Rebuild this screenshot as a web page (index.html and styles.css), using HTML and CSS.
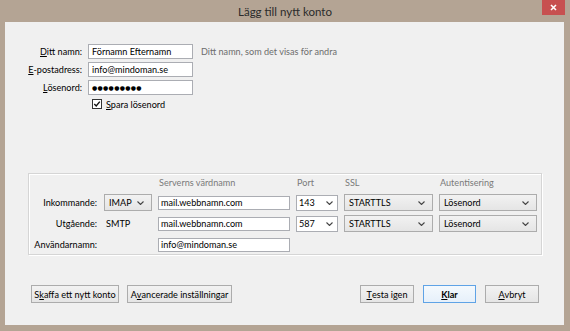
FILE: index.html
```html
<!DOCTYPE html>
<html lang="sv">
<head>
<meta charset="utf-8">
<title>Lägg till nytt konto</title>
<link rel="stylesheet" href="styles.css">
</head>
<body>
<div class="window">
  <div class="titlebar">
    <span class="title">Lägg till nytt konto</span>
    <div class="close">
      <svg width="7" height="7" viewBox="0 0 7 7"><path d="M1 1 L6 6 M6 1 L1 6" stroke="#fff" stroke-width="1.6" fill="none"/></svg>
    </div>
  </div>
  <div class="client">
    <div class="account">
      <span class="label"><u>D</u>itt namn:</span>
      <div class="input">Förnamn Efternamn</div>
      <span class="hint">Ditt namn, som det visas för andra</span>

      <span class="label"><u>E</u>-postadress:</span>
      <div class="input">info@mindoman.se</div>
      <span></span>

      <span class="label"><u>L</u>ösenord:</span>
      <div class="input"><span class="dots">●●●●●●●●●</span></div>
      <span></span>

      <span></span>
      <div class="remember">
        <svg class="check" width="10" height="10" viewBox="0 0 10 10"><rect x="0.5" y="0.5" width="9" height="9" fill="#fff" stroke="#333"/><path d="M2.3 5 L4.2 7 L7.8 2.6" stroke="#111" stroke-width="1.4" fill="none"/></svg>
        <span><u>S</u>para lösenord</span>
      </div>
    </div>

    <div class="server">
      <span></span>
      <span></span>
      <span class="head">Serverns värdnamn</span>
      <span class="head">Port</span>
      <span class="head">SSL</span>
      <span class="head">Autentisering</span>

      <span class="slabel">Inkommande:</span>
      <div class="combo"><span>IMAP</span><svg width="7" height="4" viewBox="0 0 7 4"><path d="M0.5 0.5 L3.5 3.5 L6.5 0.5" stroke="#444" stroke-width="1.1" fill="none"/></svg></div>
      <div class="sinput">mail.webbnamn.com</div>
      <div class="combo port"><span>143</span><svg width="7" height="4" viewBox="0 0 7 4"><path d="M0.5 0.5 L3.5 3.5 L6.5 0.5" stroke="#444" stroke-width="1.1" fill="none"/></svg></div>
      <div class="combo"><span>STARTTLS</span><svg width="7" height="4" viewBox="0 0 7 4"><path d="M0.5 0.5 L3.5 3.5 L6.5 0.5" stroke="#444" stroke-width="1.1" fill="none"/></svg></div>
      <div class="combo"><span>Lösenord</span><svg width="7" height="4" viewBox="0 0 7 4"><path d="M0.5 0.5 L3.5 3.5 L6.5 0.5" stroke="#444" stroke-width="1.1" fill="none"/></svg></div>

      <span class="slabel">Utgående:</span>
      <span class="smtp">SMTP</span>
      <div class="sinput">mail.webbnamn.com</div>
      <div class="combo port"><span>587</span><svg width="7" height="4" viewBox="0 0 7 4"><path d="M0.5 0.5 L3.5 3.5 L6.5 0.5" stroke="#444" stroke-width="1.1" fill="none"/></svg></div>
      <div class="combo"><span>STARTTLS</span><svg width="7" height="4" viewBox="0 0 7 4"><path d="M0.5 0.5 L3.5 3.5 L6.5 0.5" stroke="#444" stroke-width="1.1" fill="none"/></svg></div>
      <div class="combo"><span>Lösenord</span><svg width="7" height="4" viewBox="0 0 7 4"><path d="M0.5 0.5 L3.5 3.5 L6.5 0.5" stroke="#444" stroke-width="1.1" fill="none"/></svg></div>

      <span class="slabel">Användarnamn:</span>
      <span></span>
      <div class="sinput">info@mindoman.se</div>
    </div>

    <div class="btnrow">
      <div class="group">
        <div class="btn w-skaffa">S<u>k</u>affa ett nytt konto</div>
        <div class="btn w-avanc">A<u>v</u>ancerade inställningar</div>
      </div>
      <div class="group right">
        <div class="btn w-testa"><u>T</u>esta igen</div>
        <div class="btn w-klar default"><u>K</u>lar</div>
        <div class="btn w-avbryt"><u>A</u>vbryt</div>
      </div>
    </div>
  </div>
</div>
</body>
</html>
```
FILE: styles.css
```css
html, body {
  margin: 0;
  padding: 0;
}
body {
  width: 570px;
  height: 331px;
  overflow: hidden;
  font-family: Lato, "Open Sans", sans-serif;
  font-size: 9.1px;
  color: #000;
}
u {
  text-underline-offset: 1px;
}
.window {
  width: 570px;
  height: 331px;
  background: #b4a494;
  display: flex;
  flex-direction: column;
  position: relative;
}
.titlebar {
  height: 22px;
  display: flex;
  align-items: center;
  justify-content: center;
  font-size: 11.5px;
  color: #2b2b2b;
  padding-top: 1px;
  box-sizing: border-box;
}
.close {
  position: absolute;
  top: 0;
  right: 5px;
  width: 23px;
  height: 15px;
  background: #c75050;
  display: flex;
  align-items: center;
  justify-content: center;
}
.client {
  flex: 1;
  margin: 0 6px 6px 5px;
  background: #f0f0f0;
  display: flex;
  flex-direction: column;
  padding-top: 22px;
}
.account {
  display: grid;
  grid-template-columns: 77px 105px auto;
  grid-template-rows: 15px 15px 15px 12px;
  column-gap: 6px;
  row-gap: 3px;
  align-items: center;
}
.label {
  text-align: right;
  white-space: nowrap;
}
.input {
  height: 15px;
  box-sizing: border-box;
  border: 1px solid #abadb3;
  background: #fff;
  padding: 0 3px;
  display: flex;
  align-items: center;
  white-space: nowrap;
}
.dots {
  font-family: "DejaVu Sans", sans-serif;
  font-size: 6px;
  letter-spacing: 0.3px;
}
.hint {
  color: #6d6d6d;
  margin-left: 2px;
  white-space: nowrap;
}
.remember {
  grid-column: 2 / span 2;
  display: flex;
  align-items: center;
  gap: 4px;
  padding-left: 4px;
}
.check {
  display: block;
}
.server {
  margin: 63px 22px 0 23px;
  height: 82px;
  box-sizing: border-box;
  border: 1px solid #d5d5d5;
  box-shadow: inset 1px 1px 0 #fff, 1px 1px 0 #fff;
  display: grid;
  grid-template-columns: 69px 48px 132px 42px 89px 98px;
  grid-template-rows: 16px 17px 17px 17px;
  column-gap: 6px;
  row-gap: 4px;
  align-items: center;
}
.head {
  color: #7a7a7a;
  padding-left: 1px;
  white-space: nowrap;
}
.slabel {
  text-align: right;
  padding-right: 1px;
  white-space: nowrap;
}
.smtp {
  padding-left: 2px;
}
.sinput {
  height: 14px;
  box-sizing: border-box;
  border: 1px solid #abadb3;
  background: #fff;
  padding: 0 2px;
  display: flex;
  align-items: center;
  white-space: nowrap;
}
.combo {
  height: 17px;
  box-sizing: border-box;
  border: 1px solid #acacac;
  background: linear-gradient(#f2f2f2, #e5e5e5);
  display: flex;
  align-items: center;
  justify-content: space-between;
  padding: 0 7px 0 4px;
  white-space: nowrap;
}
.combo.port {
  height: 16px;
  background: #fff;
  border-color: #abadb3;
  padding: 0 4px 0 2px;
}
.btnrow {
  display: flex;
  justify-content: space-between;
  margin: 30px 25px 0 26px;
}
.group {
  display: flex;
  gap: 8px;
}
.group.right {
  gap: 9px;
}
.btn {
  height: 18px;
  box-sizing: border-box;
  border: 1px solid #acacac;
  background: linear-gradient(#f2f2f2, #e5e5e5);
  display: flex;
  align-items: center;
  justify-content: center;
  white-space: nowrap;
}
.btn.default {
  border-color: #5fa3e6;
  background: linear-gradient(#f4f9fd, #e6f0fa);
  font-weight: bold;
}
.w-skaffa { width: 88px; }
.w-avanc { width: 105px; }
.w-testa { width: 54px; }
.w-klar { width: 53px; }
.w-avbryt { width: 54px; }
```
